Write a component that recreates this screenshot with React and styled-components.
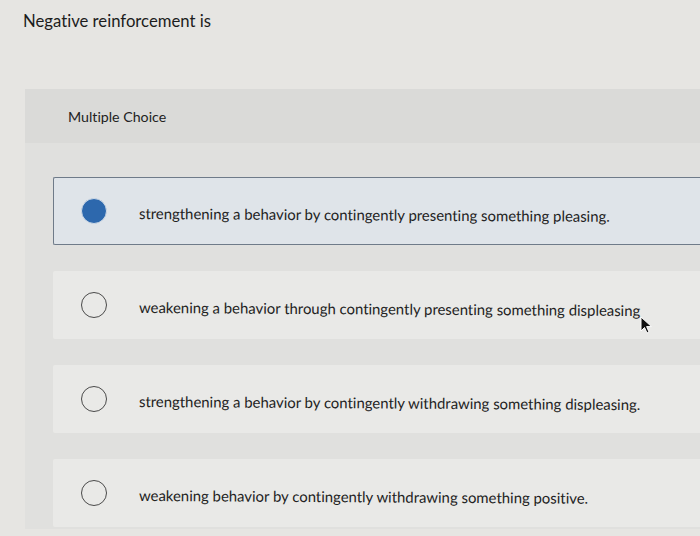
import React from 'react';
import styled, { createGlobalStyle } from 'styled-components';

const GlobalStyle = createGlobalStyle`
  html, body {
    margin: 0;
    padding: 0;
    background: #e6e5e2;
  }
  body {
    font-family: Lato, "Liberation Sans", Arial, sans-serif;
    font-variant-ligatures: none;
    color: #222;
  }
`;

const Page = styled.div`
  width: 700px;
  height: 536px;
  overflow: hidden;
  position: relative;
  background: #e6e5e2;
`;

const Question = styled.div`
  padding: 11px 0 0 23px;
  height: 89px;
  box-sizing: border-box;
  font-size: 16.7px;
  color: #1c1c1c;
`;

const Panel = styled.div`
  margin: 0 -20px 0 25px;
  background: #e0e0de;
  padding-bottom: 2px;
`;

const PanelHead = styled.div`
  height: 54px;
  display: flex;
  align-items: center;
  padding-left: 43px;
  background: #dadad8;
  font-size: 14.2px;
  color: #222;
`;

const Options = styled.div`
  display: flex;
  flex-direction: column;
  gap: 26px;
  padding: 34px 0 0 28px;
`;

const Option = styled.div`
  height: 68px;
  box-sizing: border-box;
  display: flex;
  align-items: center;
  padding-left: 27px;
  gap: 32px;
  font-size: 14.9px;
  color: #222;
  background: ${(p) => (p.$selected ? '#dfe4e9' : '#e9e9e7')};
  border: 1.5px solid ${(p) => (p.$selected ? '#6f7b89' : 'transparent')};
  border-right: none;
  border-radius: 2px 0 0 2px;
`;

const Radio = styled.span`
  width: 26px;
  height: 26px;
  flex: none;
  box-sizing: border-box;
  border-radius: 50%;
  border: ${(p) => (p.$selected ? '1px solid #cfdae6' : '1.5px solid #4a4a4a')};
  background: ${(p) => (p.$selected ? '#2d68ad' : 'transparent')};
`;

const Label = styled.span`
  position: relative;
  top: 2px;
  transform: rotate(0.35deg);
  transform-origin: left center;
`;

const Cursor = styled.svg`
  position: absolute;
  left: 639px;
  top: 315px;
`;

const options = [
  { text: 'strengthening a behavior by contingently presenting something pleasing.', selected: true },
  { text: 'weakening a behavior through contingently presenting something displeasing' },
  { text: 'strengthening a behavior by contingently withdrawing something displeasing.' },
  { text: 'weakening behavior by contingently withdrawing something positive.' },
];

export default function App() {
  return (
    <Page>
      <GlobalStyle />
      <Question>Negative reinforcement is</Question>
      <Panel>
        <PanelHead>Multiple Choice</PanelHead>
        <Options>
          {options.map((o) => (
            <Option key={o.text} $selected={o.selected}>
              <Radio $selected={o.selected} />
              <Label>{o.text}</Label>
            </Option>
          ))}
        </Options>
      </Panel>
      <Cursor width="14" height="20" viewBox="0 0 14 20">
        <path d="M2 2 L2 16 L5.5 12.5 L8 18 L10 17 L7.6 11.6 L12.5 11.6 Z" fill="#111" stroke="#fff" strokeWidth="1" />
      </Cursor>
    </Page>
  );
}
